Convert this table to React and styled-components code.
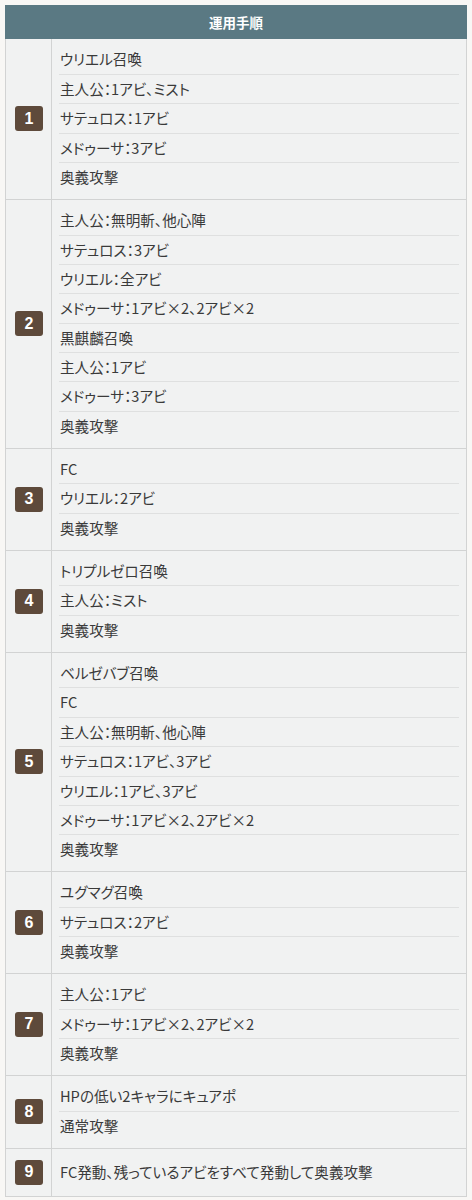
import styled, { createGlobalStyle } from "styled-components";

const steps = [
  ["ウリエル召喚", "主人公：1アビ、ミスト", "サテュロス：1アビ", "メドゥーサ：3アビ", "奥義攻撃"],
  [
    "主人公：無明斬、他心陣",
    "サテュロス：3アビ",
    "ウリエル：全アビ",
    "メドゥーサ：1アビ×2、2アビ×2",
    "黒麒麟召喚",
    "主人公：1アビ",
    "メドゥーサ：3アビ",
    "奥義攻撃",
  ],
  ["FC", "ウリエル：2アビ", "奥義攻撃"],
  ["トリプルゼロ召喚", "主人公：ミスト", "奥義攻撃"],
  [
    "ベルゼバブ召喚",
    "FC",
    "主人公：無明斬、他心陣",
    "サテュロス：1アビ、3アビ",
    "ウリエル：1アビ、3アビ",
    "メドゥーサ：1アビ×2、2アビ×2",
    "奥義攻撃",
  ],
  ["ユグマグ召喚", "サテュロス：2アビ", "奥義攻撃"],
  ["主人公：1アビ", "メドゥーサ：1アビ×2、2アビ×2", "奥義攻撃"],
  ["HPの低い2キャラにキュアポ", "通常攻撃"],
  ["FC発動、残っているアビをすべて発動して奥義攻撃"],
];

const GlobalStyle = createGlobalStyle`
  body {
    margin: 0;
    background: #f8f7f5;
    font-family: "Noto Sans CJK JP", "Noto Sans", sans-serif;
  }
`;

const Page = styled.div`
  padding: 5px 5px 6px;
`;

const Table = styled.div`
  border: 1px solid #d2d3d3;
  background: #f1f2f2;
`;

const Header = styled.div`
  background: #5a7983;
  color: #fff;
  font-weight: bold;
  font-size: 13.5px;
  font-feature-settings: "palt";
  height: 34px;
  display: flex;
  align-items: center;
  justify-content: center;
  margin: -1px -1px 0;
`;

const Row = styled.div`
  display: grid;
  grid-template-columns: 46px 1fr;
  border-top: 1px solid #d2d3d3;
  &:first-of-type {
    border-top: none;
  }
`;

const NumCell = styled.div`
  display: flex;
  align-items: center;
  justify-content: center;
  border-right: 1px solid #d2d3d3;
  padding-left: 1px;
`;

const Badge = styled.span`
  width: 28px;
  height: 25px;
  border-radius: 3px;
  background: #5e4a3b;
  color: #fff;
  font-family: "Liberation Sans", Arial, sans-serif;
  font-weight: bold;
  font-size: 16px;
  display: flex;
  align-items: center;
  justify-content: center;
`;

const Items = styled.div`
  padding: ${(p) => (p.$single ? "9px 7px" : "6.4px 7px")};
`;

const Item = styled.div`
  height: 28.4px;
  line-height: 28.4px;
  font-size: 14.6px;
  font-feature-settings: "palt";
  color: #3a3a3a;
  padding: 0 1px;
  border-bottom: 1px solid #dfe0e0;
  &:last-child {
    border-bottom-color: transparent;
  }
`;

export default function App() {
  return (
    <Page>
      <GlobalStyle />
      <Table>
        <Header>運用手順</Header>
        <div>
          {steps.map((items, i) => (
            <Row key={i}>
              <NumCell>
                <Badge>{i + 1}</Badge>
              </NumCell>
              <Items $single={items.length === 1}>
                {items.map((t, j) => (
                  <Item key={j}>{t}</Item>
                ))}
              </Items>
            </Row>
          ))}
        </div>
      </Table>
    </Page>
  );
}
